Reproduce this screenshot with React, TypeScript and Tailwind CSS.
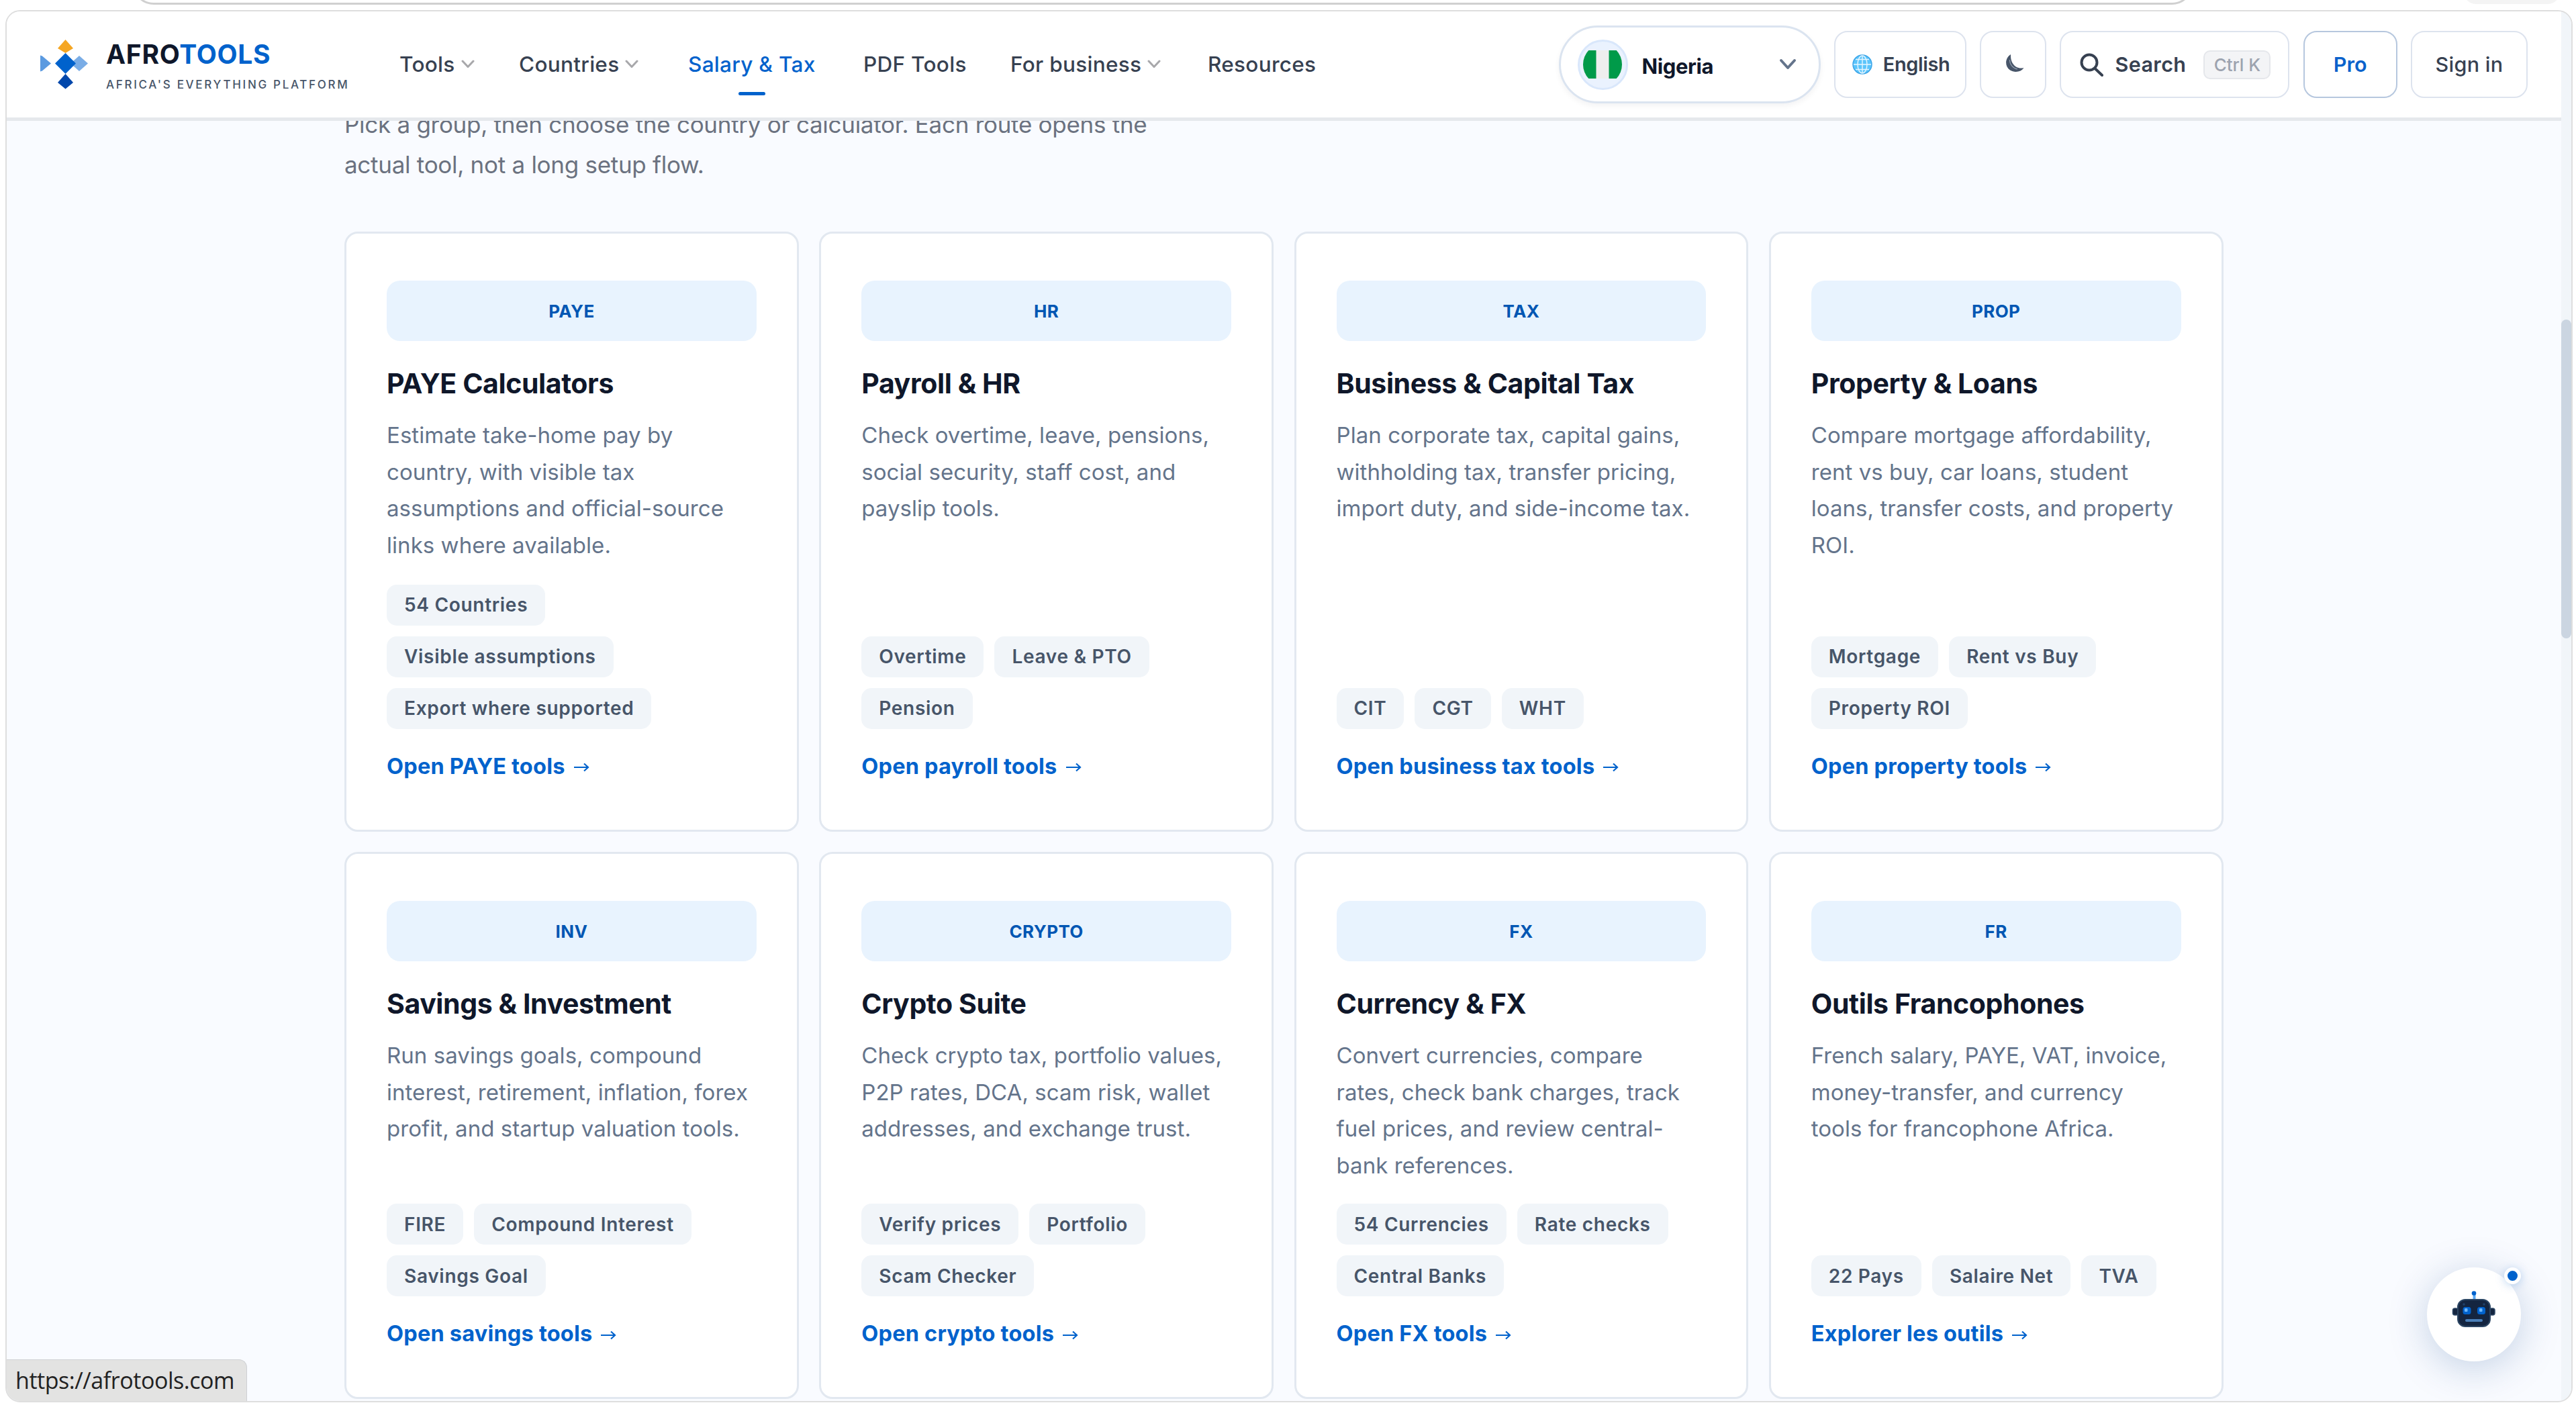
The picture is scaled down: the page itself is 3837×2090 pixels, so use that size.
import { ReactNode } from "react";

interface Group {
  code: string;
  title: string;
  lines: string[];
  tags: string[];
  link: string;
}

const groups: Group[] = [
  {
    code: "PAYE",
    title: "PAYE Calculators",
    lines: ["Estimate take-home pay by", "country, with visible tax", "assumptions and official-source", "links where available."],
    tags: ["54 Countries", "Visible assumptions", "Export where supported"],
    link: "Open PAYE tools",
  },
  {
    code: "HR",
    title: "Payroll & HR",
    lines: ["Check overtime, leave, pensions,", "social security, staff cost, and", "payslip tools."],
    tags: ["Overtime", "Leave & PTO", "Pension"],
    link: "Open payroll tools",
  },
  {
    code: "TAX",
    title: "Business & Capital Tax",
    lines: ["Plan corporate tax, capital gains,", "withholding tax, transfer pricing,", "import duty, and side-income tax."],
    tags: ["CIT", "CGT", "WHT"],
    link: "Open business tax tools",
  },
  {
    code: "PROP",
    title: "Property & Loans",
    lines: ["Compare mortgage affordability,", "rent vs buy, car loans, student", "loans, transfer costs, and property", "ROI."],
    tags: ["Mortgage", "Rent vs Buy", "Property ROI"],
    link: "Open property tools",
  },
  {
    code: "INV",
    title: "Savings & Investment",
    lines: ["Run savings goals, compound", "interest, retirement, inflation, forex", "profit, and startup valuation tools."],
    tags: ["FIRE", "Compound Interest", "Savings Goal"],
    link: "Open savings tools",
  },
  {
    code: "CRYPTO",
    title: "Crypto Suite",
    lines: ["Check crypto tax, portfolio values,", "P2P rates, DCA, scam risk, wallet", "addresses, and exchange trust."],
    tags: ["Verify prices", "Portfolio", "Scam Checker"],
    link: "Open crypto tools",
  },
  {
    code: "FX",
    title: "Currency & FX",
    lines: ["Convert currencies, compare", "rates, check bank charges, track", "fuel prices, and review central-", "bank references."],
    tags: ["54 Currencies", "Rate checks", "Central Banks"],
    link: "Open FX tools",
  },
  {
    code: "FR",
    title: "Outils Francophones",
    lines: ["French salary, PAYE, VAT, invoice,", "money-transfer, and currency", "tools for francophone Africa."],
    tags: ["22 Pays", "Salaire Net", "TVA"],
    link: "Explorer les outils",
  },
];

function Logo() {
  return (
    <div className="flex w-[535px] shrink-0 items-center gap-[26px]">
      <svg viewBox="60 58 72 78" className="h-[78px] w-[72px] shrink-0">
        <path d="M60 83.5L63 84.5L76 95.5L63 106.5L60 107.5Z" fill="#5b9ae0" />
        <path d="M118 84L131 95.5L118 107L105 95.5Z" fill="#7aade6" />
        <path d="M97.5 60L109 73L97.5 80L86 73Z" fill="#f5a623" />
        <path d="M97.5 80L113 95.5L97.5 111L82 95.5Z" fill="#0062cc" />
        <path d="M97.5 111L109 124L97.5 133.5L86 124Z" fill="#0047ab" />
      </svg>
      <div className="flex flex-col gap-[13px] pt-[3px]">
        <div className="text-[39px] leading-[44px] font-bold tracking-[0.7px] whitespace-nowrap text-[#0f172a]">
          AFRO<span className="text-[#0062cc]">TOOLS</span>
        </div>
        <div className="text-[17px] leading-[20px] font-medium tracking-[2.7px] whitespace-nowrap text-[#475569]">
          AFRICA'S EVERYTHING PLATFORM
        </div>
      </div>
    </div>
  );
}

function NavItem({ label, width, menu, active }: { label: string; width: string; menu?: boolean; active?: boolean }) {
  return (
    <div className={`relative flex shrink-0 items-center gap-[9px] ${width} ${active ? "text-[#0062cc]" : "text-[#374151]"}`}>
      <span className="text-[31.5px] leading-[40px] font-medium tracking-[0.3px] whitespace-nowrap">{label}</span>
      {menu && (
        <svg viewBox="0 0 20 14" className="h-[14px] w-[20px]" fill="none" stroke="#a8a8ab" strokeWidth="3">
          <path d="M2 2L10 10.5L18 2" strokeLinecap="round" strokeLinejoin="round" />
        </svg>
      )}
      {active && <span className="absolute top-[61px] left-[75px] h-[5px] w-[40px] rounded-full bg-[#0062cc]" />}
    </div>
  );
}

function HeaderButton({ className, children }: { className: string; children: ReactNode }) {
  return (
    <button className={`flex h-[100px] shrink-0 items-center rounded-[20px] border-2 bg-white text-[30.5px] whitespace-nowrap ${className}`}>
      {children}
    </button>
  );
}

function Globe() {
  return (
    <svg viewBox="0 0 30 30" className="h-[30px] w-[30px]" fill="none">
      <circle cx="15" cy="15" r="14" fill="#5cc5fb" stroke="#3da5e8" strokeWidth="1.5" />
      <g stroke="#e6f6ff" strokeWidth="1.4">
        <ellipse cx="15" cy="15" rx="7" ry="13" />
        <path d="M15 2V28M2 15H28M5 7.5H25M5 22.5H25" />
      </g>
    </svg>
  );
}

function Header() {
  return (
    <header className="relative z-10 flex h-[163px] shrink-0 items-center border-b-[5px] border-[#e5e8ec] bg-white pl-[50px]">
      <Logo />
      <nav className="flex flex-1 items-center">
        <NavItem label="Tools" width="w-[178px]" menu />
        <NavItem label="Countries" width="w-[252px]" menu />
        <NavItem label="Salary & Tax" width="w-[261px]" active />
        <NavItem label="PDF Tools" width="w-[219px]" />
        <NavItem label="For business" width="w-[294px]" menu />
        <NavItem label="Resources" width="w-[170px]" />
      </nav>
      <div className="flex items-center gap-[20.3px] pr-[50px]">
        <div className="flex h-[116px] w-[390px] items-center rounded-full border-[3px] border-[#dbe4f0] bg-white pr-[33px] pl-[25px] shadow-[0_4px_8px_rgba(15,23,42,0.05)]">
          <div className="flex size-[75px] items-center justify-center rounded-full border-[3px] border-[#d9e7fb] bg-[#eaf2fe]">
            <svg viewBox="0 0 58 42" className="h-[42px] w-[58px]">
              <clipPath id="flag">
                <ellipse cx="29" cy="21" rx="29" ry="30" />
              </clipPath>
              <g clipPath="url(#flag)">
                <rect width="58" height="42" fill="#eeeeee" />
                <rect width="19.5" height="42" fill="#009a49" />
                <rect x="38.5" width="19.5" height="42" fill="#009a49" />
              </g>
            </svg>
          </div>
          <span className="mt-[6px] ml-[21px] flex-1 text-[31px] font-bold tracking-[-0.4px] text-[#0f172a]">Nigeria</span>
          <svg viewBox="0 0 26 18" className="h-[18px] w-[26px]" fill="none" stroke="#64748b" strokeWidth="4">
            <path d="M3 3L13 14L23 3" strokeLinecap="round" strokeLinejoin="round" />
          </svg>
        </div>
        <HeaderButton className="w-[197px] gap-[16px] border-[#dde3ee] pl-[25px] font-semibold text-[#374151]">
          <Globe />
          <span className="text-[29px] tracking-[-0.4px]">English</span>
        </HeaderButton>
        <HeaderButton className="w-[99px] justify-center border-[#dde3ee]">
          <svg viewBox="0 0 28 28" className="mb-[5px] ml-[4px] h-[28px] w-[28px]">
            <path d="M8 1C-1 7 -1 19 7 24.500C14 29 24 27 27.500 21C21 23 14.500 20 11 14.500C8 9.500 8 5 8 1Z" fill="#475569" />
            <path d="M6.500 9C6.500 16 11 21.500 18 23" fill="none" stroke="#94a0b0" strokeWidth="1.200" />
          </svg>
        </HeaderButton>
        <HeaderButton className="w-[342px] border-[#dde3ee] pl-[28px] font-semibold text-[#374151]">
          <svg viewBox="0 0 36 36" className="h-[36px] w-[36px]" fill="none" stroke="#374151" strokeWidth="4" strokeLinecap="round">
            <circle cx="14" cy="15" r="11.5" />
            <path d="M22.5 24L33 34" />
          </svg>
          <span className="ml-[16px] tracking-[0.4px]">Search</span>
          <kbd className="ml-[26px] flex h-[43px] w-[100px] items-center justify-center rounded-[10px] border-2 border-[#e5e7eb] bg-[#f3f4f6] font-[Inter,sans-serif] text-[26px] font-medium tracking-[-0.1px] text-[#9ca3af]">
            Ctrl K
          </kbd>
        </HeaderButton>
        <HeaderButton className="w-[140px] justify-center border-[#b6c7de] font-semibold text-[#0a62cb]">Pro</HeaderButton>
        <HeaderButton className="w-[174px] justify-center border-[#dde3ee] font-medium tracking-[0.3px] text-[#374151]">Sign in</HeaderButton>
      </div>
    </header>
  );
}

function GroupCard({ group }: { group: Group }) {
  return (
    <article className="flex flex-col rounded-[20px] border-[3px] border-[#e2e8f0] bg-white px-[60px] pt-[70px] pb-[71px]">
      <div className="flex h-[90px] items-center justify-center rounded-[20px] bg-[#e8f3fe] text-[26px] font-bold tracking-[0.4px] text-[#0056b3]">
        {group.code}
      </div>
      <h3 className="mt-[37px] text-[41px] leading-[52px] font-bold tracking-[-0.4px] whitespace-nowrap text-[#0f172a]">{group.title}</h3>
      <p className="mt-[24px] text-[33px] leading-[54.6px] tracking-[0.05px] whitespace-nowrap text-[#64748b]">
        {group.lines.map((line) => (
          <span key={line} className="block">
            {line}
          </span>
        ))}
      </p>
      <div className="mt-auto flex flex-wrap gap-[16px]">
        {group.tags.map((tag) => (
          <span key={tag} className="flex h-[61px] items-center rounded-[15px] bg-[#f1f5f9] px-[26px] text-[28px] font-semibold tracking-[0.7px] whitespace-nowrap text-[#475569]">
            {tag}
          </span>
        ))}
      </div>
      <a className="mt-[33px] flex items-center text-[32.5px] leading-[46px] font-bold tracking-[0.2px] whitespace-nowrap text-[#0062cc]">
        {group.link}
        <svg viewBox="0 0 24 16" className="mt-[3px] ml-[12px] h-[16px] w-[24px]" fill="none" stroke="#0062cc" strokeWidth="2.2">
          <path d="M1 8H22M16 2.5L22 8L16 13.5" />
        </svg>
      </a>
    </article>
  );
}

function ChatButton() {
  return (
    <div className="absolute top-[1871px] left-[3605px] size-[140px] rounded-full bg-white shadow-[0_10px_60px_rgba(0,60,130,0.22)]">
      <svg viewBox="0 0 66 56" className="absolute top-[34px] left-[37px] h-[56px] w-[66px]">
        <rect x="31.5" y="6" width="4" height="8" fill="#5aa9f5" />
        <circle cx="33" cy="4.5" r="3.3" fill="#0062cc" />
        <rect x="1.5" y="27" width="8" height="10" rx="3" fill="#142540" stroke="#2c4664" strokeWidth="1.5" />
        <rect x="56" y="27" width="8" height="10" rx="3" fill="#142540" stroke="#2c4664" strokeWidth="1.5" />
        <rect x="9" y="14" width="48" height="40" rx="11" fill="#142540" stroke="#2c4664" strokeWidth="2" />
        <circle cx="18" cy="21" r="1.7" fill="#21436c" />
        <circle cx="48" cy="21" r="1.7" fill="#21436c" />
        <rect x="16.5" y="25" width="12" height="11" rx="3.5" fill="#0062cc" />
        <rect x="38" y="25" width="12" height="11" rx="3.5" fill="#0062cc" />
        <rect x="19" y="27" width="4.5" height="5" rx="1" fill="#6cb6fb" />
        <rect x="41" y="27" width="4.5" height="5" rx="1" fill="#6cb6fb" />
        <rect x="20" y="43" width="26" height="4" rx="2" fill="#4a7fb8" />
      </svg>
      <span className="absolute top-0 right-0 size-[25px] rounded-full border-[5px] border-white bg-[#0062cc] shadow-[0_2px_14px_rgba(0,98,204,0.25)]" />
    </div>
  );
}

export default function App() {
  return (
    <div className="flex h-[2090px] w-[3837px] flex-col overflow-hidden bg-white font-[Inter,sans-serif]">
      {/* bottom edge of the browser toolbar */}
      <div className="flex h-[15px] shrink-0 items-start overflow-hidden">
        <div className="-mt-[60px] ml-[197px] h-[67px] w-[3070px] rounded-[32px] border-[3px] border-[#d0d0d0]" />
        <div className="-mt-[30px] ml-[403px] h-[36px] w-[143px] rounded-[18px] bg-[#f4f4f4]" />
      </div>

      <div className="relative ml-[8px] flex h-[2074px] w-[3824px] shrink-0 flex-col overflow-hidden rounded-[22px] border-2 border-[#dedede] bg-[#f9fbff]">
        <div className="flex h-full">
          <div className="flex w-[3805px] shrink-0 flex-col">
            <Header />
            <main className="flex flex-col pl-[503px]">
              <p className="-mt-[25px] mb-[53px] h-[137px] text-[35px] leading-[60px] tracking-[-0.28px] whitespace-nowrap text-[#6b7280]">
                Pick a group, then choose the country or calculator. Each route opens the
                <br />
                actual tool, not a long setup flow.
              </p>
              <div className="grid w-[2798.5px] grid-cols-4 grid-rows-[893.5px_815px] gap-[30.5px]">
                {groups.map((group) => (
                  <GroupCard key={group.code} group={group} />
                ))}
              </div>
            </main>
          </div>
          <div className="flex-1 bg-[#f1f5f9] pt-[459px]">
            <div className="h-[475px] rounded-full bg-[#cbd5e1]" />
          </div>
        </div>
        <ChatButton />
        <div className="absolute bottom-0 left-0 flex h-[62px] w-[358px] items-center rounded-tr-[12px] border-t border-r border-[#cfd1d4] bg-[#e3e3e2] pl-[13px] font-['Open_Sans',sans-serif] text-[34px] tracking-[-0.45px] text-[#222222]">
          https://afrotools.com
        </div>
      </div>
    </div>
  );
}
